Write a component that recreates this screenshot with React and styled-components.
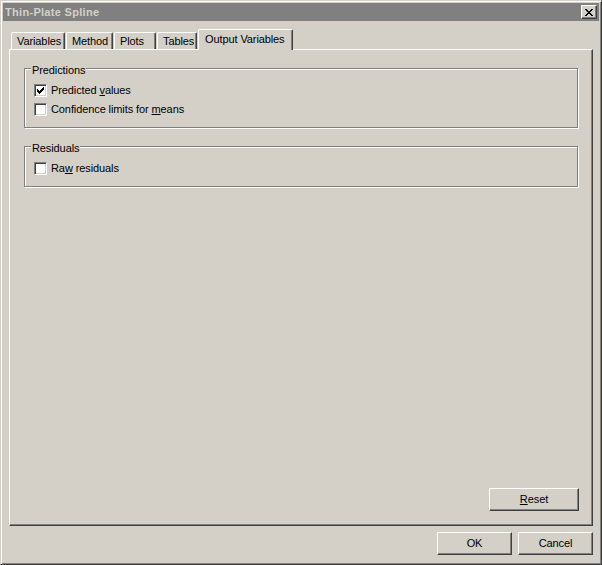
import styled, { createGlobalStyle } from "styled-components";

const GlobalStyle = createGlobalStyle`
  html, body {
    margin: 0;
    padding: 0;
    background: #d4d0c8;
  }
  body {
    font-family: "Liberation Sans", Arial, sans-serif;
    font-size: 11px;
    letter-spacing: -0.1px;
    color: #000;
  }
`;

const Window = styled.div`
  box-sizing: border-box;
  width: 602px;
  height: 565px;
  padding: 2px;
  display: flex;
  flex-direction: column;
  background: #d4d0c8;
  border: 1px solid;
  border-color: #d4d0c8 #404040 #404040 #d4d0c8;
  box-shadow: inset 1px 1px #fff, inset -1px -1px #808080;
`;

const TitleBar = styled.div`
  height: 18px;
  display: flex;
  align-items: center;
  justify-content: space-between;
  padding: 0 2px;
  background: #808080;
`;

const Title = styled.span`
  color: #d4d0c8;
  font-weight: bold;
  font-size: 11px;
  letter-spacing: 0.3px;
  line-height: 13px;
`;

const CloseButton = styled.button`
  box-sizing: border-box;
  width: 16px;
  height: 14px;
  padding: 0;
  display: flex;
  align-items: center;
  justify-content: center;
  background: #d4d0c8;
  border: 1px solid;
  border-color: #fff #404040 #404040 #fff;
  box-shadow: inset -1px -1px #808080;
`;

const Body = styled.div`
  flex: 1;
  display: flex;
  flex-direction: column;
  padding: 8px 6px 7px 6px;
`;

const TabStrip = styled.div`
  position: relative;
  z-index: 1;
  height: 20px;
  display: flex;
  align-items: flex-end;
  padding-left: 2px;
`;

const Tab = styled.div`
  box-sizing: border-box;
  width: ${(p) => p.$w}px;
  height: ${(p) => (p.$active ? 21 : 17)}px;
  margin-right: 1px;
  margin-bottom: ${(p) => (p.$active ? -1 : 0)}px;
  padding: ${(p) => (p.$active ? "3px 0 0 6px" : "2px 0 0 5px")};
  background: #d4d0c8;
  border-top: 1px solid #fff;
  border-left: 1px solid #fff;
  border-right: 1px solid #404040;
  border-top-left-radius: 2px;
  border-top-right-radius: 2px;
  box-shadow: inset -1px 0 #808080;
  line-height: 13px;
  white-space: nowrap;
`;

const Panel = styled.div`
  flex: 1;
  display: flex;
  flex-direction: column;
  box-sizing: border-box;
  padding: 18px 13px 14px 14px;
  border: 1px solid;
  border-color: #fff #404040 #404040 #fff;
  box-shadow: inset -1px -1px #808080;
`;

const Group = styled.div`
  position: relative;
  display: flex;
  flex-direction: column;
  margin-right: 1px;
  margin-top: ${(p) => p.$gap || 0}px;
  padding: 12px 0 8px 9px;
  border: 1px solid #808080;
  box-shadow: inset 1px 1px #fff, 1px 1px #fff;
`;

const Legend = styled.span`
  position: absolute;
  top: -5px;
  left: 6px;
  padding: 0 1px;
  background: #d4d0c8;
  line-height: 13px;
`;

const CheckRow = styled.label`
  height: 19px;
  display: flex;
  align-items: center;
  gap: 4px;
  line-height: 13px;
`;

const Box = styled.span`
  box-sizing: border-box;
  width: 13px;
  height: 13px;
  display: flex;
  align-items: center;
  justify-content: center;
  background: #fff;
  border: 1px solid;
  border-color: #808080 #fff #fff #808080;
  box-shadow: inset 1px 1px #404040, inset -1px -1px #d4d0c8;
`;

const Spacer = styled.div`
  flex: 1;
`;

const ButtonRow = styled.div`
  display: flex;
  justify-content: flex-end;
  gap: 6px;
  margin-top: ${(p) => p.$top || 0}px;
`;

const Button = styled.button`
  box-sizing: border-box;
  width: ${(p) => p.$w}px;
  height: 23px;
  padding: 0 0 2px 0;
  background: #d4d0c8;
  border: 1px solid;
  border-color: #fff #404040 #404040 #fff;
  box-shadow: inset -1px -1px #808080;
  font-family: "Liberation Sans", Arial, sans-serif;
  font-size: 11px;
  letter-spacing: -0.1px;
  color: #000;
`;

const checkRows = [
  [6, 1, 0],
  [5, 2, 1],
  [0, 1, 2],
  [4, 3, 2],
  [0, 2, 3],
  [3, 3, 3],
  [0, 5, 4],
  [1, 3, 5],
  [2, 1, 6],
];

const closeRows = [
  [0, 2, 0], [6, 2, 0],
  [1, 2, 1], [5, 2, 1],
  [2, 4, 2],
  [3, 2, 3],
  [2, 4, 4],
  [1, 2, 5], [5, 2, 5],
  [0, 2, 6], [6, 2, 6],
];

function PixelIcon({ rows, w, h }) {
  return (
    <svg width={w} height={h} viewBox={`0 0 ${w} ${h}`} shapeRendering="crispEdges">
      {rows.map(([x, width, y], i) => (
        <rect key={i} x={x} y={y} width={width} height={1} fill="#000" />
      ))}
    </svg>
  );
}

function Check({ checked, children }) {
  return (
    <CheckRow>
      <Box>{checked && <PixelIcon rows={checkRows} w={7} h={7} />}</Box>
      <span>{children}</span>
    </CheckRow>
  );
}

const tabs = [
  ["Variables", 54],
  ["Method", 47],
  ["Plots", 42],
  ["Tables", 40],
  ["Output Variables", 95],
];

export default function App() {
  return (
    <>
      <GlobalStyle />
      <Window>
        <TitleBar>
          <Title>Thin-Plate Spline</Title>
          <CloseButton>
            <PixelIcon rows={closeRows} w={8} h={7} />
          </CloseButton>
        </TitleBar>
        <Body>
          <TabStrip>
            {tabs.map(([name, w]) => (
              <Tab key={name} $w={w} $active={name === "Output Variables"}>
                {name}
              </Tab>
            ))}
          </TabStrip>
          <Panel>
            <Group>
              <Legend>Predictions</Legend>
              <Check checked>
                Predicted <u>v</u>alues
              </Check>
              <Check>
                Confidence limits for <u>m</u>eans
              </Check>
            </Group>
            <Group $gap={18}>
              <Legend>Residuals</Legend>
              <Check>
                Ra<u>w</u> residuals
              </Check>
            </Group>
            <Spacer />
            <ButtonRow>
              <Button $w={90}>
                <u>R</u>eset
              </Button>
            </ButtonRow>
          </Panel>
          <ButtonRow $top={6}>
            <Button $w={75}>OK</Button>
            <Button $w={75}>Cancel</Button>
          </ButtonRow>
        </Body>
      </Window>
    </>
  );
}
